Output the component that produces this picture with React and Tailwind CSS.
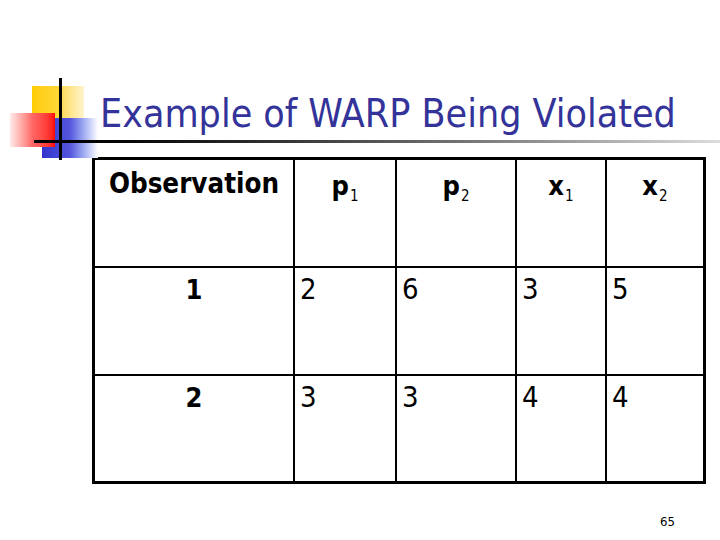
import React from "react";

const font = { fontFamily: '"DejaVu Sans Condensed", "DejaVu Sans", sans-serif' };

function Logo() {
  return (
    <div className="absolute left-0 top-0 w-[110px] h-[170px]">
      <div className="absolute left-[32px] top-[86px] w-[52px] h-[50px] bg-gradient-to-r from-[#ffcc00] via-[#ffd633] to-[#fff4cc]" />
      <div className="absolute left-[42px] top-[118px] w-[56px] h-[40px] bg-gradient-to-r from-[#3333cc] via-[#5555dd] to-[#ffffff]" />
      <div className="absolute left-[10px] top-[113px] w-[45px] h-[34px] bg-gradient-to-l from-[#ff0000] via-[#ff6666] to-[#ffeaea]" />
      <div className="absolute left-[59px] top-[78px] w-[3px] h-[82px] bg-black" />
    </div>
  );
}

const Sub = ({ children }) => (
  <span className="text-[15px] font-normal relative top-[6px] ml-[1px]">{children}</span>
);

export default function App() {
  const head = "bg-white flex justify-center pt-[8px] text-[27px] font-bold text-black leading-none";
  const obs = "bg-white flex justify-center pt-[10px] text-[27.5px] font-bold text-black leading-none";
  const cell = "bg-white pl-[5px] pt-[7px] text-[29px] text-black leading-none";
  const lab = "bg-white flex justify-center pt-[8px] text-[27px] font-bold leading-none";
  return (
    <div className="relative w-[720px] h-[540px] bg-white overflow-hidden" style={font}>
      <Logo />
      <div className="absolute left-[34px] top-[140px] w-[686px] h-[3px] bg-gradient-to-r from-black via-[#555555] to-[#dddddd]" />
      <div className="pl-[100px] pt-[94px] h-[157px]">
        <h1 className="text-[39px] leading-none text-[#333399] whitespace-nowrap">Example of WARP Being Violated</h1>
      </div>
      <div className="ml-[92px] w-[614px] border-[3px] border-black bg-black grid grid-cols-[198px_100px_118px_88px_96px] grid-rows-[106px_106px_105px] gap-[2px]">
        <div className={obs}>Observation</div>
        <div className={head}><span className="pt-[4px]">p<Sub>1</Sub></span></div>
        <div className={head}><span className="pt-[4px]">p<Sub>2</Sub></span></div>
        <div className={head}><span className="pt-[4px]">x<Sub>1</Sub></span></div>
        <div className={head}><span className="pt-[4px]">x<Sub>2</Sub></span></div>

        <div className={lab}>1</div>
        <div className={cell}>2</div>
        <div className={cell}>6</div>
        <div className={cell}>3</div>
        <div className={cell}>5</div>

        <div className={lab}>2</div>
        <div className={cell}>3</div>
        <div className={cell}>3</div>
        <div className={cell}>4</div>
        <div className={cell}>4</div>
      </div>
      <div className="absolute left-[660px] top-[515px] text-[13px] leading-none text-black">65</div>
    </div>
  );
}
